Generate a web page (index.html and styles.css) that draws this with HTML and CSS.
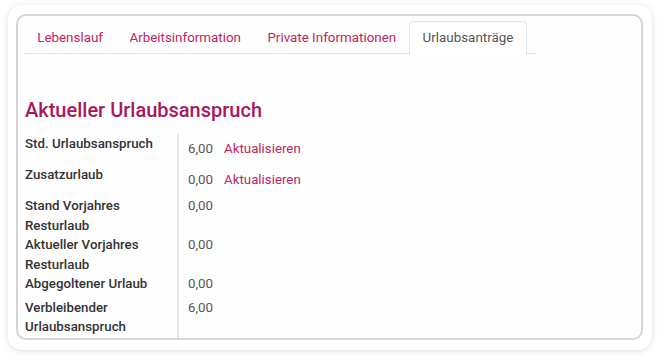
FILE: index.html
```html
<!DOCTYPE html>
<html lang="de">
<head>
    <meta charset="UTF-8">
    <title>Urlaubsanträge</title>
    <link rel="stylesheet" href="styles.css">
</head>
<body>
    <div class="outer-card">
        <div class="panel">
            <ul class="nav-tabs">
                <li><a href="#">Lebenslauf</a></li>
                <li><a href="#">Arbeitsinformation</a></li>
                <li><a href="#">Private Informationen</a></li>
                <li class="active"><a href="#">Urlaubsanträge</a></li>
            </ul>

            <h2 class="section-title">Aktueller Urlaubsanspruch</h2>

            <table class="vacation">
                <tr class="row-action">
                    <th>Std. Urlaubsanspruch</th>
                    <td><span class="value">6,00</span><a class="action" href="#">Aktualisieren</a></td>
                </tr>
                <tr class="row-action">
                    <th>Zusatzurlaub</th>
                    <td><span class="value">0,00</span><a class="action" href="#">Aktualisieren</a></td>
                </tr>
                <tr>
                    <th>Stand Vorjahres Resturlaub</th>
                    <td><span class="value">0,00</span></td>
                </tr>
                <tr>
                    <th>Aktueller Vorjahres Resturlaub</th>
                    <td><span class="value">0,00</span></td>
                </tr>
                <tr class="row-spaced">
                    <th>Abgegoltener Urlaub</th>
                    <td><span class="value">0,00</span></td>
                </tr>
                <tr>
                    <th>Verbleibender Urlaubsanspruch</th>
                    <td><span class="value">6,00</span></td>
                </tr>
            </table>
        </div>
    </div>
</body>
</html>
```

FILE: styles.css
```css
body {
    font-family: Roboto, "Liberation Sans", Arial, sans-serif;
    background-color: #fff;
    margin: 0;
    padding: 5px 8px 9px 8px;
}

.outer-card {
    width: 644px;
    height: 345px;
    box-sizing: border-box;
    background-color: #fff;
    border-radius: 14px;
    box-shadow: 0 1px 6px rgba(0, 0, 0, 0.13);
    padding: 9px 9px 10px 8px;
}

.panel {
    height: 100%;
    box-sizing: border-box;
    border: 2px solid #d5d5d5;
    border-radius: 10px;
    background-color: #fefefe;
    padding: 5px 6px 0 6px;
    overflow: hidden;
}

.nav-tabs {
    list-style: none;
    margin: 0;
    padding: 0 9px 0 0;
    display: inline-flex;
    border-bottom: 1px solid #dfe5ec;
}

.nav-tabs li {
    margin-bottom: -1px;
}

.nav-tabs a {
    display: block;
    height: 31px;
    line-height: 32px;
    padding: 0 12.2px;
    border: 1px solid transparent;
    border-bottom: none;
    border-radius: 4px 4px 0 0;
    font-size: 13.4px;
    color: #c2245f;
    text-decoration: none;
}

.nav-tabs .active a {
    color: #555;
    background-color: #fff;
    border-color: #dfe5ec;
    height: 32px;
}

.section-title {
    margin: 43px 0 0 1px;
    font-size: 20px;
    font-weight: 500;
    line-height: 26px;
    color: #a8185c;
}

.vacation {
    border-collapse: collapse;
    margin: 11px 0 0 1px;
    font-size: 13.3px;
    line-height: 19.5px;
}

.vacation th {
    width: 152px;
    padding: 0;
    text-align: left;
    vertical-align: top;
    font-weight: 500;
    color: #333;
    border-right: 2px solid #e6e6e6;
}

.vacation td {
    padding: 0 0 0 9px;
    vertical-align: top;
    color: #555;
}

.row-action th {
    height: 31px;
}

.row-action td {
    padding-top: 5px;
}

.row-spaced th {
    padding-bottom: 4px;
}

.vacation tr:last-child th {
    padding-bottom: 2px;
}

.action {
    margin-left: 11px;
    color: #c2245f;
    text-decoration: none;
}
```
